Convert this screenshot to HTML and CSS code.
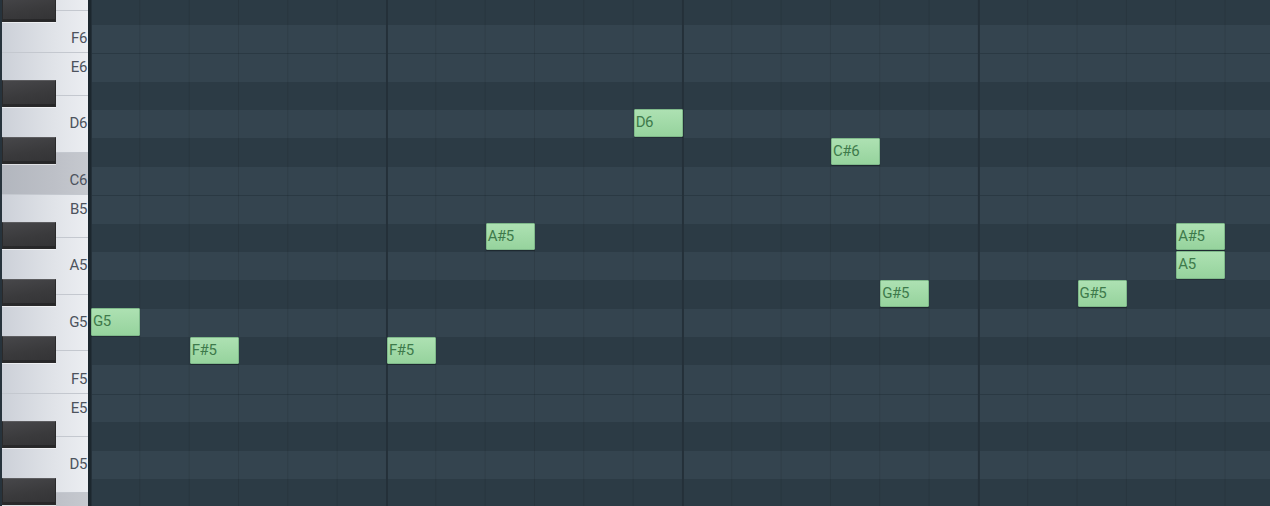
FILE: index.html
```html
<!DOCTYPE html>
<html lang="en">

<head>
    <meta charset="UTF-8">
    <meta name="viewport" content="width=device-width, initial-scale=1.0">
    <link rel="stylesheet" href="styles.css">
    <title>Piano Roll</title>
</head>

<body>

    <div class="roll">
        <div class="keys">
            <div class="key-col">
                <div class="wkey half"></div>
                <div class="wkey short bottom"><span>F6</span></div>
                <div class="wkey short top"><span>E6</span></div>
                <div class="wkey long"><span>D6</span></div>
                <div class="wkey short bottom c-key"><span>C6</span></div>
                <div class="wkey short top"><span>B5</span></div>
                <div class="wkey long"><span>A5</span></div>
                <div class="wkey long"><span>G5</span></div>
                <div class="wkey short bottom"><span>F5</span></div>
                <div class="wkey short top"><span>E5</span></div>
                <div class="wkey long"><span>D5</span></div>
                <div class="wkey short bottom c-key"></div>
            </div>
            <!-- black keys sit over the white ones -->
            <div class="bkey" style="--row:0"></div>
            <div class="bkey" style="--row:3"></div>
            <div class="bkey" style="--row:5"></div>
            <div class="bkey" style="--row:8"></div>
            <div class="bkey" style="--row:10"></div>
            <div class="bkey" style="--row:12"></div>
            <div class="bkey" style="--row:15"></div>
            <div class="bkey" style="--row:17"></div>
        </div>

        <div class="edge"></div>

        <div class="grid">
            <div class="rows">
                <div class="row dark"></div>
                <div class="row"></div>
                <div class="row sep"></div>
                <div class="row dark"></div>
                <div class="row"></div>
                <div class="row dark"></div>
                <div class="row"></div>
                <div class="row sep"></div>
                <div class="row dark"></div>
                <div class="row"></div>
                <div class="row dark"></div>
                <div class="row"></div>
                <div class="row dark"></div>
                <div class="row"></div>
                <div class="row sep"></div>
                <div class="row dark"></div>
                <div class="row"></div>
                <div class="row dark"></div>
            </div>
            <div class="beats"></div>

            <div class="note" style="--col:0;--row:11">G5</div>
            <div class="note" style="--col:2;--row:12">F#5</div>
            <div class="note" style="--col:6;--row:12">F#5</div>
            <div class="note" style="--col:8;--row:8">A#5</div>
            <div class="note" style="--col:11;--row:4">D6</div>
            <div class="note" style="--col:15;--row:5">C#6</div>
            <div class="note" style="--col:16;--row:10">G#5</div>
            <div class="note" style="--col:20;--row:10">G#5</div>
            <div class="note" style="--col:22;--row:8">A#5</div>
            <div class="note" style="--col:22;--row:9">A5</div>
        </div>
    </div>

</body>

</html>
```

FILE: styles.css
```css
body {
    margin: 0;
    padding: 0;
    overflow: hidden;
    background-color: #2d3c46;
    font-family: Roboto, 'Liberation Sans', sans-serif;
}

.roll {
    display: flex;
    height: 506px;
    overflow: hidden;
}

/* keyboard */

.keys {
    position: relative;
    width: 86px;
    border-left: 2px solid #27333c;
    overflow: hidden;
    flex-shrink: 0;
}

.key-col {
    display: flex;
    flex-direction: column;
    margin-top: -3.6px;
}

.wkey {
    display: flex;
    flex-direction: column;
    align-items: flex-end;
    box-sizing: border-box;
    background: linear-gradient(90deg, #ccd0d8, #e0e3e8 60%, #eceef2);
    border-bottom: 1px solid #c4c8cf;
}

.wkey.half {
    height: 14.2px;
}

.wkey.short {
    height: 42.6px;
}

.wkey.long {
    height: 56.8px;
    justify-content: center;
}

.wkey.top {
    justify-content: flex-start;
}

.wkey.bottom {
    justify-content: flex-end;
}

.wkey.c-key {
    background: linear-gradient(90deg, #b2b6be, #bdc0c7 60%, #c6c9cf);
}

.wkey span {
    height: 28.4px;
    line-height: 28.4px;
    padding-right: 1px;
    font-size: 15px;
    letter-spacing: -0.4px;
    color: #4d535d;
}

.bkey {
    position: absolute;
    left: 0;
    top: calc(var(--row) * 28.4px - 5.2px);
    width: 54px;
    height: 27px;
    box-sizing: border-box;
    background: linear-gradient(170deg, #47474a, #3a3a3c 55%, #333335);
    border: 1px solid #2a2a2b;
    border-top-color: #5c5c5f;
    box-shadow: 0 1px 0 rgba(255, 255, 255, 0.55), inset 0 -2px 0 rgba(0, 0, 0, 0.25);
}

.edge {
    width: 3px;
    background-color: #1c272e;
    flex-shrink: 0;
}

/* grid */

.grid {
    position: relative;
    flex: 1;
    overflow: hidden;
}

.rows {
    display: flex;
    flex-direction: column;
    margin-top: -3.6px;
}

.row {
    height: 28.4px;
    box-sizing: border-box;
    background-color: #34444f;
}

.row.dark {
    background-color: #2c3b45;
}

.row.sep {
    border-top: 1px solid #2a3943;
}

.beats {
    position: absolute;
    top: 0;
    left: 0;
    right: 0;
    bottom: 0;
    pointer-events: none;
    background-image:
        linear-gradient(90deg, #243039 0 2px, transparent 2px),
        linear-gradient(90deg, rgba(0, 0, 0, 0.1) 0 1px, transparent 1px);
    background-size: 295.98px 100%, 49.33px 100%;
    background-position: -1px 0, -1px 0;
}

.note {
    position: absolute;
    left: calc(var(--col) * 49.33px);
    top: calc(var(--row) * 28.4px - 4.2px);
    width: 49px;
    height: 27.4px;
    box-sizing: border-box;
    padding-left: 1px;
    background: linear-gradient(#ade1b2, #96d39d);
    border: 1px solid #7fb98a;
    border-radius: 1px;
    box-shadow: 0 1px 0 rgba(0, 0, 0, 0.3);
    font-size: 15px;
    letter-spacing: -0.4px;
    line-height: 25px;
    color: #3e7a4b;
    white-space: nowrap;
}
```
